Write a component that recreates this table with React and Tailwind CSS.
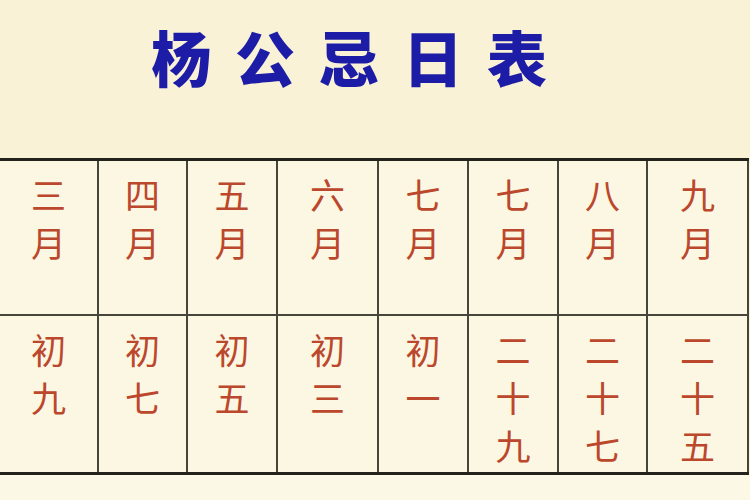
import React from "react";

const cols = [
  { w: "w-[99px]", top: ["三", "月"], bot: ["初", "九"] },
  { w: "w-[89px]", top: ["四", "月"], bot: ["初", "七"] },
  { w: "w-[90px]", top: ["五", "月"], bot: ["初", "五"] },
  { w: "w-[101px]", top: ["六", "月"], bot: ["初", "三"] },
  { w: "w-[90px]", top: ["七", "月"], bot: ["初", "一"] },
  { w: "w-[90px]", top: ["七", "月"], bot: ["二", "十", "九"] },
  { w: "w-[89px]", top: ["八", "月"], bot: ["二", "十", "七"] },
  { w: "w-[101px]", top: ["九", "月"], bot: ["二", "十", "五"] },
];

function Cell({ chars }) {
  return (
    <div className="flex flex-col items-center pt-[9px] text-[35px] leading-[48px] text-[#bb482c]">
      {chars.map((c, i) => (
        <span key={i}>{c}</span>
      ))}
    </div>
  );
}

export default function App() {
  return (
    <div
      className="w-[750px] h-[500px] bg-[#f9f2d6] overflow-hidden flex flex-col"
      style={{ fontFamily: '"Noto Sans CJK SC", "Noto Sans CJK JP", sans-serif' }}
    >
      <div className="h-[158px] flex items-start pl-[151px] pt-[18px]">
        <h1 className="text-[60px] leading-[76px] font-black tracking-[24px] text-[#1c1ca6]">
          杨公忌日表
        </h1>
      </div>
      <div className="flex border-t-[3px] border-b-[3px] border-[#23231c] w-[749px]">
        {cols.map((c, i) => (
          <div key={i} className={`${c.w} flex flex-col border-r-2 border-[#45453a]`}>
            <div className="h-[153px] bg-[#fcf7e3]">
              <Cell chars={c.top} />
            </div>
            <div className="h-[2px] bg-[#45453a]" />
            <div className="h-[156px] bg-[#fcf7e3]">
              <Cell chars={c.bot} />
            </div>
          </div>
        ))}
      </div>
      <div className="flex-1 bg-[#fcf8e6]" />
    </div>
  );
}
